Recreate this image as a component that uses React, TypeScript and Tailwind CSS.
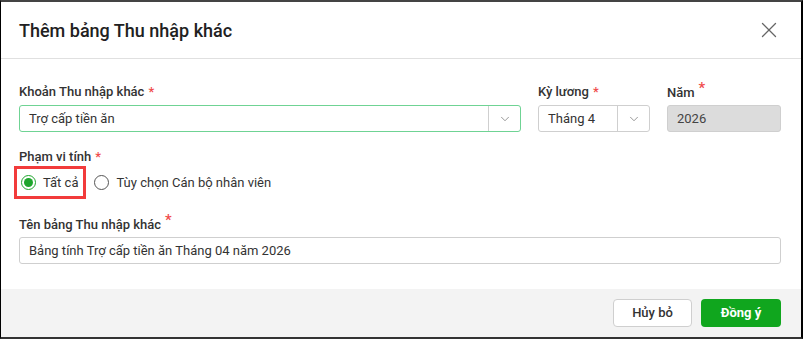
import { ChevronDown, X } from 'lucide-react';

const Req = ({ sup }: { sup?: boolean }) => (
  <span className={sup ? 'ml-[4px] text-[#f04b4b] text-[15px] relative top-[-4px]' : 'ml-[4px] text-[#f04b4b]'}>*</span>
);

const Label = ({ text, sup }: { text: string; sup?: boolean }) => (
  <div className="h-[16px] mb-[5px] text-[13px] leading-[16px] font-medium text-[#333]">
    {text}
    <Req sup={sup} />
  </div>
);

const Select = ({ value, focused }: { value: string; focused?: boolean }) => (
  <div
    className={`flex h-[27px] rounded-[3px] border bg-white ${
      focused ? 'border-[#6fd394]' : 'border-[#cfcfcf]'
    }`}
  >
    <div className="flex-1 flex items-center pl-[9px] text-[13px] text-[#333]">{value}</div>
    <div className="w-[32px] flex items-center justify-center border-l border-[#cfcfcf]">
      <ChevronDown size={14} strokeWidth={1.3} className="text-[#777]" />
    </div>
  </div>
);

const Radio = ({ checked, label }: { checked?: boolean; label: string }) => (
  <div className="flex items-center">
    <div
      className={`w-[15px] h-[15px] rounded-full border flex items-center justify-center bg-white ${
        checked ? 'border-[#1ea52c]' : 'border-[#555]'
      }`}
    >
      {checked && <div className="w-[9px] h-[9px] rounded-full bg-[#1ea52c]" />}
    </div>
    <span className="ml-[7px] text-[13px] text-[#333]">{label}</span>
  </div>
);

export default function App() {
  return (
    <div
      className="w-[803px] h-[339px] flex flex-col bg-white border-l border-l-black border-t-2 border-t-[#444] border-r-2 border-r-black border-b-2 border-b-[#333]"
      style={{ fontFamily: 'Roboto, "Noto Sans", sans-serif' }}
    >
      {/* Header */}
      <div className="h-[57px] shrink-0 flex items-center justify-between pl-[18px] pr-[19px] border-b border-[#e0e0e0]">
        <h1 className="text-[18px] font-medium text-[#212121]">Thêm bảng Thu nhập khác</h1>
        <X size={26} strokeWidth={1.2} className="text-[#666]" />
      </div>

      {/* Body */}
      <div className="flex-1 pl-[18px] pr-[20px] pt-[25px]">
        <div className="flex gap-[17px]">
          <div className="flex-1">
            <Label text="Khoản Thu nhập khác" />
            <Select value="Trợ cấp tiền ăn" focused />
          </div>
          <div className="w-[112px]">
            <Label text="Kỳ lương" />
            <Select value="Tháng 4" />
          </div>
          <div className="w-[114px]">
            <Label text="Năm" sup />
            <div className="h-[27px] rounded-[3px] border border-[#cfcfcf] bg-[#dcdcdc] flex items-center pl-[9px] text-[13px] text-[#444]">
              2026
            </div>
          </div>
        </div>

        <div className="mt-[17px] h-[16px] text-[13px] leading-[16px] font-medium text-[#333]">
          Phạm vi tính
          <Req />
        </div>

        <div className="flex items-center mt-[1px] ml-[-5px]">
          <div className="h-[33px] flex items-center border-[3px] border-[#f23b3b] pl-[4px] pr-[5px]">
            <Radio checked label="Tất cả" />
          </div>
          <div className="ml-[8px]">
            <Radio label="Tùy chọn Cán bộ nhân viên" />
          </div>
        </div>

        <div className="mt-[17px]">
          <Label text="Tên bảng Thu nhập khác" sup />
          <div className="h-[27px] rounded-[3px] border border-[#cfcfcf] flex items-center pl-[9px] text-[13px] text-[#333]">
            Bảng tính Trợ cấp tiền ăn Tháng 04 năm 2026
          </div>
        </div>
      </div>

      {/* Footer */}
      <div className="h-[48px] shrink-0 bg-[#f3f3f3] flex items-center justify-end gap-[9px] pr-[20px]">
        <button className="w-[79px] h-[28px] rounded-[4px] border border-[#cfcfcf] bg-white text-[13px] font-medium text-[#333]">
          Hủy bỏ
        </button>
        <button className="w-[80px] h-[28px] rounded-[4px] bg-[#10a61e] text-[13px] font-bold text-white">
          Đồng ý
        </button>
      </div>
    </div>
  );
}
